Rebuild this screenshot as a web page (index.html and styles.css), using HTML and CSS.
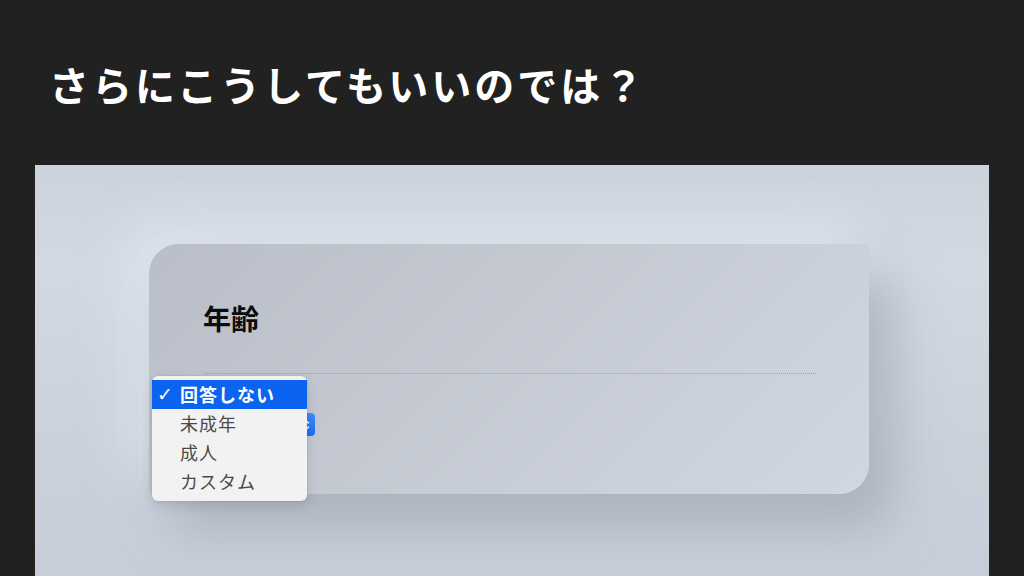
FILE: index.html
```html
<!DOCTYPE html>
<html lang="ja">
<head>
<meta charset="utf-8">
<link rel="stylesheet" href="styles.css">
</head>
<body>
<div class="slide">
  <h1 class="title">さらにこうしてもいいのでは？</h1>
  <div class="shot">
    <div class="card">
      <h2 class="label">年齢</h2>
      <div class="rule"></div>
      <div class="select">
        <span class="select-arrow">
          <svg width="8" height="14" viewBox="0 0 8 14"><path d="M1.5 5 L4 2.5 L6.5 5 M1.5 9 L4 11.5 L6.5 9" fill="none" stroke="#fff" stroke-width="1.5" stroke-linecap="round" stroke-linejoin="round"/></svg>
        </span>
      </div>
      <ul class="menu">
        <li class="item selected"><span class="check">✓</span>回答しない</li>
        <li class="item">未成年</li>
        <li class="item">成人</li>
        <li class="item">カスタム</li>
      </ul>
    </div>
  </div>
</div>
</body>
</html>
```

FILE: styles.css
```css
html, body {
  margin: 0;
  padding: 0;
  background: #212121;
  overflow: hidden;
}
.slide {
  width: 1024px;
  height: 576px;
  display: flex;
  flex-direction: column;
  font-family: "Noto Sans CJK JP", "Noto Sans", sans-serif;
}
.title {
  margin: 0;
  padding: 56px 0 0 49px;
  height: 165px;
  flex: none;
  box-sizing: border-box;
  color: #ffffff;
  font-size: 40px;
  font-weight: 700;
  line-height: 56px;
  letter-spacing: 3px;
}
.shot {
  margin-left: 35px;
  width: 954px;
  flex: 1;
  background: linear-gradient(180deg, #cdd3dd 0%, #d3d9e3 25%, #cbd1db 70%, #c8ced9 100%);
  padding: 79px 0 0 114px;
  box-sizing: border-box;
  overflow: hidden;
}
.card {
  position: relative;
  width: 720px;
  height: 250px;
  border-radius: 30px;
  border-top-right-radius: 4px;
  border-bottom-left-radius: 4px;
  background: linear-gradient(135deg, #b9bec8 0%, #c4c9d2 45%, #d1d7e2 100%);
  box-shadow: 24px 34px 50px rgba(150, 158, 172, 0.6), -20px -20px 50px rgba(228, 233, 241, 0.7);
  padding: 54px 53px 0 54px;
  box-sizing: border-box;
}
.label {
  margin: 0;
  font-size: 28px;
  font-weight: 700;
  color: #0c0c0c;
  line-height: 40px;
}
.rule {
  margin-top: 35px;
  margin-left: 2px;
  border-top: 1px dotted #9aa0ab;
  height: 0;
}
.select {
  position: absolute;
  left: 56px;
  top: 169px;
  width: 110px;
  height: 23px;
  border-radius: 5px;
  background: #eef0f3;
  display: flex;
  justify-content: flex-end;
}
.select-arrow {
  width: 18px;
  height: 23px;
  border-radius: 4px;
  background: linear-gradient(180deg, #3d8bfd, #1f6ef2);
  display: flex;
  align-items: center;
  justify-content: center;
}
.menu {
  position: absolute;
  left: 3px;
  top: 132px;
  width: 155px;
  margin: 0;
  padding: 4px 0 5px;
  list-style: none;
  background: #f2f2f2;
  border-radius: 6px;
  box-shadow: 0 4px 12px rgba(0, 0, 0, 0.12), 0 0 0 0.5px rgba(0, 0, 0, 0.08);
}
.item {
  height: 29px;
  line-height: 29px;
  padding-left: 28px;
  font-size: 18px;
  color: #4a4a4a;
  position: relative;
  letter-spacing: 1px;
}
.item.selected {
  background: #0a64f0;
  color: #ffffff;
  font-weight: 700;
}
.check {
  position: absolute;
  left: 5px;
  top: 0;
  font-size: 19px;
  font-weight: 700;
  font-family: "DejaVu Sans", sans-serif;
}
```
